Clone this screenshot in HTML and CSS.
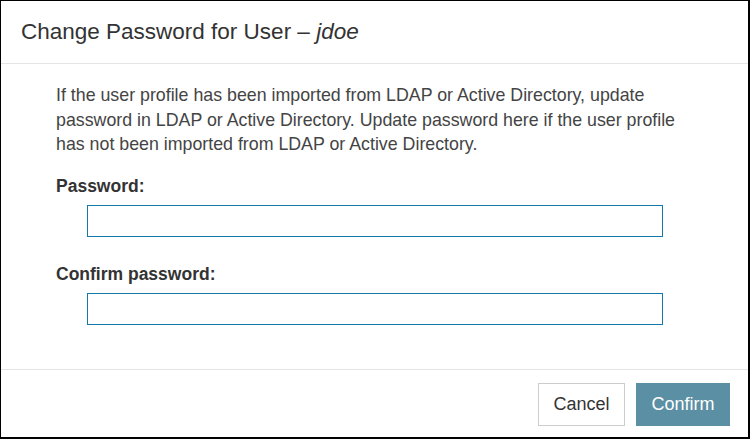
FILE: index.html
```html
<!DOCTYPE html>
<html>
<head>
<meta charset="utf-8">
<link rel="stylesheet" href="styles.css">
</head>
<body>
<div class="dialog">
  <div class="dialog-header">
    <h1 class="dialog-title">Change Password for User – <em>jdoe</em></h1>
  </div>
  <div class="dialog-body">
    <p class="intro">If the user profile has been imported from LDAP or Active Directory, update password in LDAP or Active Directory. Update password here if the user profile has not been imported from LDAP or Active Directory.</p>
    <label class="field-label" for="pw">Password:</label>
    <input class="field-input" id="pw" type="password">
    <label class="field-label second" for="pw2">Confirm password:</label>
    <input class="field-input" id="pw2" type="password">
  </div>
  <div class="dialog-footer">
    <button class="btn btn-cancel">Cancel</button>
    <button class="btn btn-confirm">Confirm</button>
  </div>
</div>
</body>
</html>
```
FILE: styles.css
```css
html, body {
  margin: 0;
  padding: 0;
  background: #fff;
}
.dialog {
  box-sizing: border-box;
  width: 750px;
  height: 439px;
  border-style: solid;
  border-color: #000;
  border-width: 1px 2px 2px 1px;
  display: flex;
  flex-direction: column;
  font-family: "Liberation Sans", Arial, sans-serif;
  color: #333;
}
.dialog-header {
  height: 62px;
  border-bottom: 1px solid #e5e5e5;
  padding-left: 20px;
  display: flex;
  align-items: center;
}
.dialog-title {
  margin: 0;
  font-size: 22.5px;
  font-weight: normal;
  color: #333;
}
.dialog-title em {
  font-style: italic;
}
.dialog-body {
  flex: 1;
  padding: 19px 70px 0 55px;
  display: flex;
  flex-direction: column;
  align-items: flex-start;
}
.intro {
  margin: 0 0 17px 0;
  font-size: 17.8px;
  line-height: 24.5px;
  color: #444;
}
.field-label {
  font-size: 17.5px;
  line-height: 24px;
  font-weight: bold;
  color: #333;
  margin-bottom: 7px;
}
.field-label.second {
  margin-top: 25px;
}
.field-input {
  box-sizing: border-box;
  margin: 0 0 0 31px;
  width: 576px;
  height: 32px;
  border: 1px solid #1279a9;
  border-radius: 0;
  padding: 0 8px;
  outline: none;
  background: #fff;
}
.dialog-footer {
  border-top: 1px solid #e5e5e5;
  padding: 13px 18px 11px 0;
  display: flex;
  justify-content: flex-end;
  gap: 11px;
}
.btn {
  box-sizing: border-box;
  height: 43px;
  font-family: "Liberation Sans", Arial, sans-serif;
  font-size: 18px;
  border-radius: 0;
  padding: 0 10px;
  cursor: pointer;
}
.btn-cancel {
  width: 87px;
  background: #fff;
  border: 1px solid #ccc;
  color: #333;
}
.btn-confirm {
  width: 94px;
  background: #5b8fa3;
  border: 1px solid #5b8fa3;
  color: #fff;
}
```
